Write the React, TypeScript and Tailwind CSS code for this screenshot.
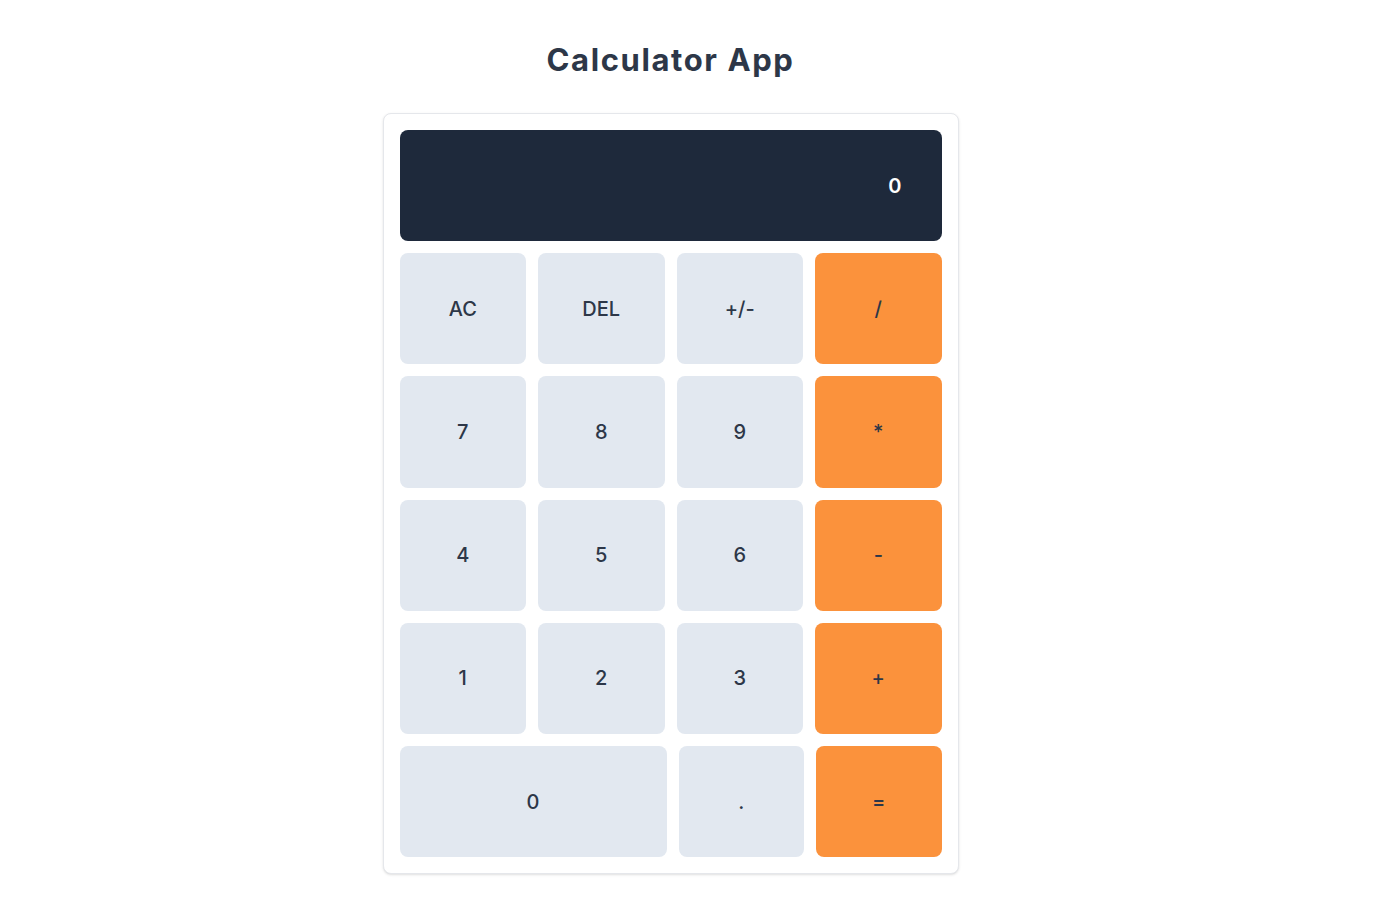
const rows: string[][] = [
  ["AC", "DEL", "+/-", "/"],
  ["7", "8", "9", "*"],
  ["4", "5", "6", "-"],
  ["1", "2", "3", "+"],
];

const ops = ["/", "*", "-", "+", "="];

function Key({ label }: { label: string }) {
  const isOp = ops.includes(label);
  return (
    <button
      type="button"
      className={
        isOp
          ? "h-[111.25px] rounded-lg bg-[#fb923c] text-xl font-medium text-[#2d3748]"
          : "h-[111.25px] rounded-lg bg-[#e2e8f0] text-xl font-medium text-[#2d3748]"
      }
    >
      {label}
    </button>
  );
}

export default function App() {
  return (
    <div className="flex min-h-screen flex-col items-center bg-white pr-[52px] pt-[35px] font-['Inter',sans-serif]">
      <h1 className="mb-[28px] text-[31px] font-bold leading-[50px] tracking-[1.6px] text-[#2d3748]">Calculator App</h1>
      <div className="w-[576px] rounded-lg border border-[#e5e7eb] bg-white p-4 shadow-sm">
        <div className="mb-3 flex h-[111px] items-center justify-end rounded-lg bg-[#1e293b] pr-10 text-xl font-semibold text-white">
          0
        </div>
        <div className="flex flex-col gap-3">
          {rows.map((row, i) => (
            <div key={i} className="grid grid-cols-4 gap-3">
              {row.map((k) => (
                <Key key={k} label={k} />
              ))}
            </div>
          ))}
          <div className="grid grid-cols-[267px_1fr_1fr] gap-3">
            <Key label="0" />
            <Key label="." />
            <Key label="=" />
          </div>
        </div>
      </div>
    </div>
  );
}
